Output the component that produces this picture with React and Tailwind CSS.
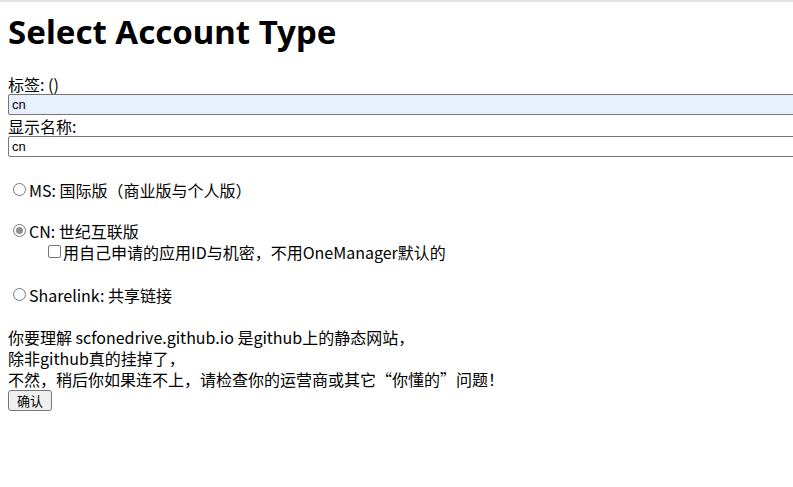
import { useState } from 'react'

const body = { fontFamily: '"Noto Sans CJK SC", "Noto Sans", sans-serif' }

function Radio({ checked }) {
  return (
    <span className="inline-flex w-[13px] h-[13px] mr-[3px] ml-[5px] rounded-full border border-[#767676] bg-white items-center justify-center shrink-0">
      {checked && <span className="w-[7px] h-[7px] rounded-full bg-[#8f8f8f]" />}
    </span>
  )
}

function Line({ className = '', children, onClick }) {
  return (
    <div className={`flex items-center h-[21px] text-[16px] leading-none ${className}`} onClick={onClick}>
      {children}
    </div>
  )
}

export default function App() {
  const [type, setType] = useState('CN')

  return (
    <div className="min-h-[487px] bg-white border-t-2 border-[#e3e3e3] text-black px-2 overflow-hidden" style={body}>
      <h1
        className="text-[33px] font-bold leading-[40px] pt-[10px] h-[71px]"
        style={{ fontFamily: '"Noto Sans", "Open Sans", sans-serif' }}
      >
        Select Account Type
      </h1>

      <Line>标签: ()</Line>
      <div className="h-[21px] w-[800px] border border-[#767676] rounded-[2px] bg-[#e8f0fe] px-[3px] text-[13px] leading-[19px]" style={{ fontFamily: '"Liberation Sans", Arial, sans-serif' }}>cn</div>
      <Line>显示名称:</Line>
      <div className="h-[21px] w-[800px] border border-[#767676] rounded-[2px] bg-white px-[3px] text-[13px] leading-[19px]" style={{ fontFamily: '"Liberation Sans", Arial, sans-serif' }}>cn</div>

      <Line className="mt-[22px]" onClick={() => setType('MS')}>
        <Radio checked={type === 'MS'} />MS: 国际版（商业版与个人版）
      </Line>

      <Line className="mt-[20px]" onClick={() => setType('CN')}>
        <Radio checked={type === 'CN'} />CN: 世纪互联版
      </Line>
      <Line className="pl-10">
        <span className="w-[13px] h-[13px] border border-[#767676] rounded-[2px] bg-white mr-[2px] shrink-0" />用自己申请的应用ID与机密，不用OneManager默认的
      </Line>

      <Line className="mt-[22px]" onClick={() => setType('Sharelink')}>
        <Radio checked={type === 'Sharelink'} />Sharelink: 共享链接
      </Line>

      <div className="mt-[21px]">
        <Line>你要理解 scfonedrive.github.io 是github上的静态网站，</Line>
        <Line>除非github真的挂掉了，</Line>
        <Line>不然，稍后你如果连不上，请检查你的运营商或其它“你懂的”问题！</Line>
      </div>
      <button className="block mt-[1px] h-[21px] px-[8px] text-[13px] leading-none border border-[#767676] rounded-[3px] bg-[#efefef]">
        确认
      </button>
    </div>
  )
}
